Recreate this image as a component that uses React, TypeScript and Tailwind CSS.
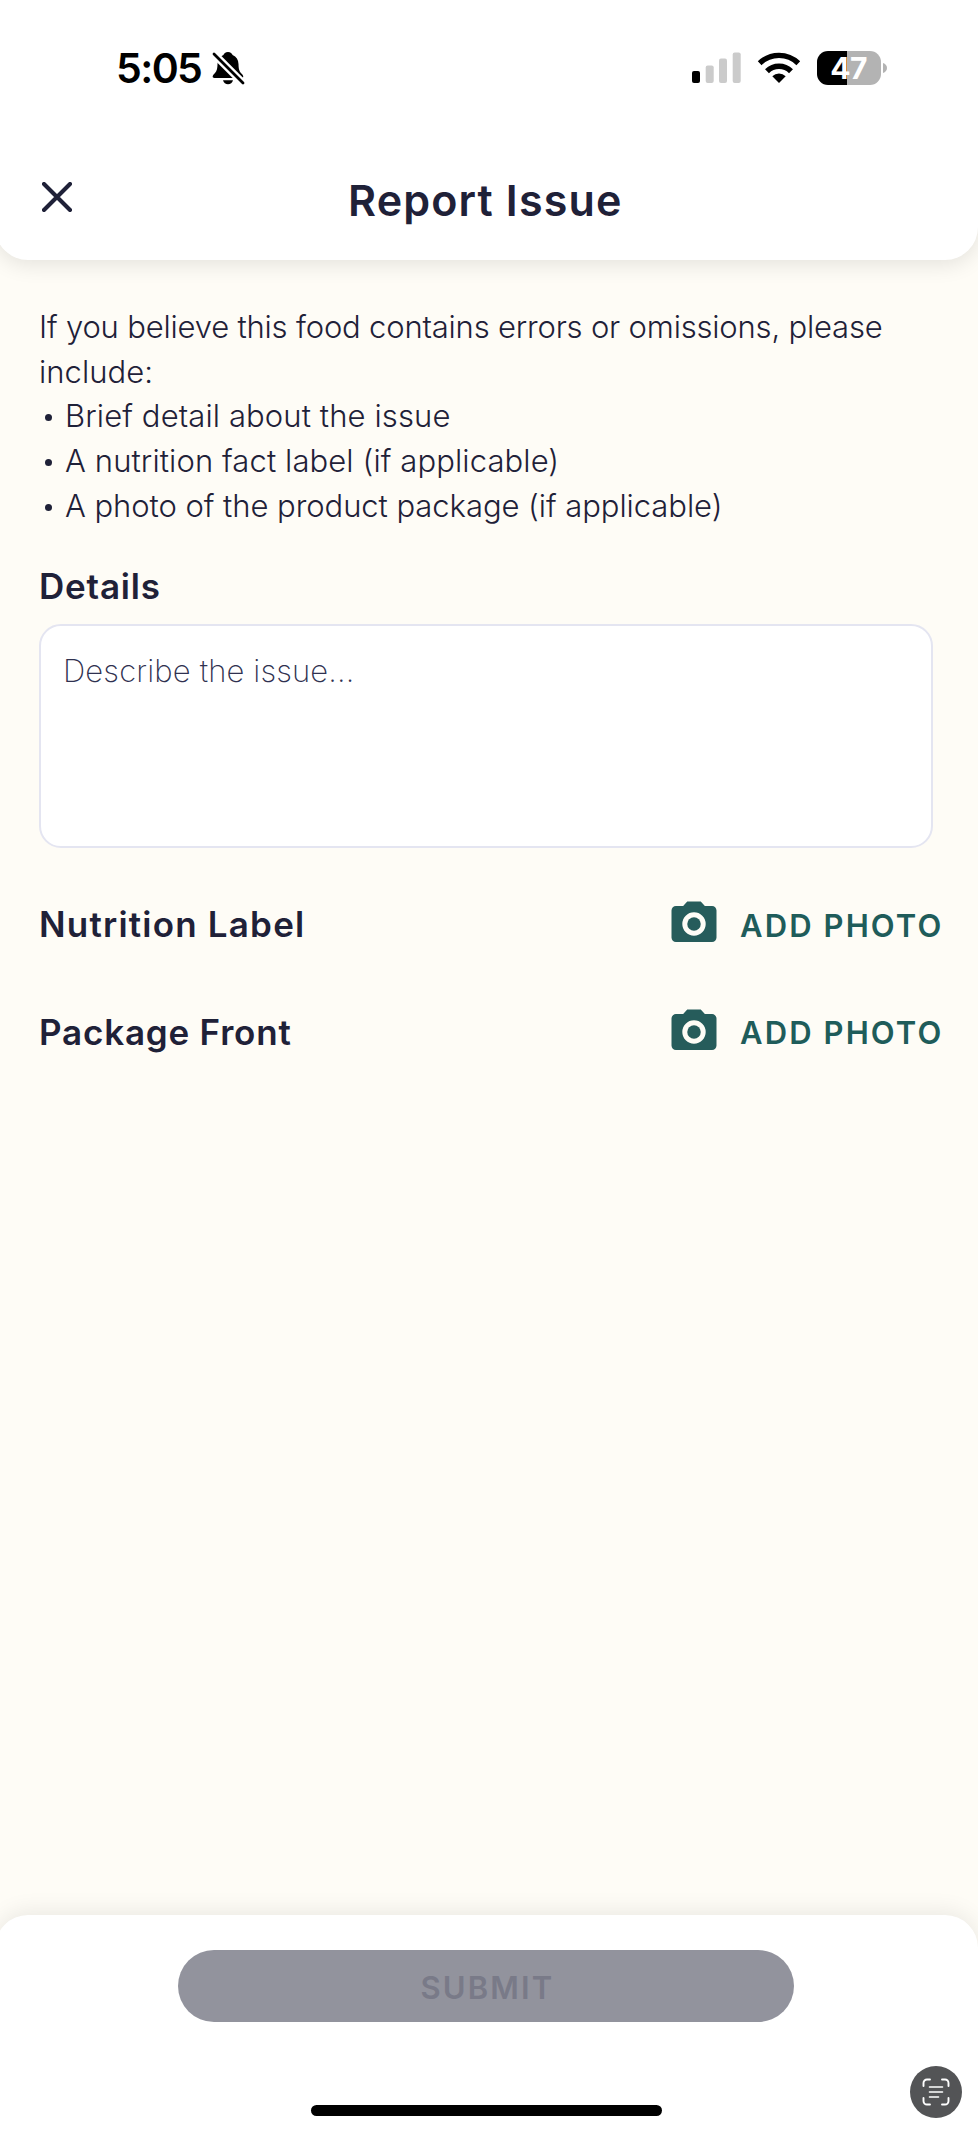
import React from "react";

function BellOff() {
  return (
    <svg width="34" height="36" viewBox="0 0 34 36" fill="none" className="shrink-0">
      <path
        d="M17 2c-2.6 0-4 1.5-4.6 3C8.600 6.500 6.600 9.800 6.500 14c-.1 5.500-1 7.500-3.200 9.800C1.200 26 1 28 3.500 28h27c2.500 0 2.200-2 .2-4.200-2.300-2.300-3.100-4.300-3.200-9.800-.1-4.200-2.100-7.500-5.900-9C21 3.500 19.600 2 17 2z"
        fill="#000"
      />
      <path d="M12 30.300h10c-.7 2.500-2.600 4-5 4s-4.300-1.500-5-4z" fill="#000" />
      <path d="M3 4 32 33" stroke="#fff" strokeWidth="7.500" />
      <path d="M3 4 32 33" stroke="#000" strokeWidth="2.800" strokeLinecap="round" />
    </svg>
  );
}

function Signal() {
  return (
    <svg width="49" height="32" viewBox="0 0 49 32" className="shrink-0">
      <rect x="0" y="19" width="8" height="12" rx="2" fill="#000" />
      <rect x="13.700" y="13.500" width="8" height="17.500" rx="2" fill="#cbcbcb" />
      <rect x="27" y="6.500" width="8" height="24.500" rx="2" fill="#cbcbcb" />
      <rect x="40.700" y="0.500" width="8" height="30.500" rx="2" fill="#cbcbcb" />
    </svg>
  );
}

function Wifi() {
  return (
    <svg width="44" height="32" viewBox="0 0 44 32" fill="none" className="shrink-0">
      <path d="M2.700 11.200a27.600 27.600 0 0 1 38.600 0" stroke="#000" strokeWidth="5.400" />
      <path d="M10 19.200a17.200 17.200 0 0 1 24 0" stroke="#000" strokeWidth="5.600" />
      <path d="M22 31l-6.700-6.700a9.600 9.600 0 0 1 13.400 0z" fill="#000" />
    </svg>
  );
}

function Camera() {
  return (
    <svg width="54" height="54" viewBox="0 0 24 24" className="shrink-0">
      <path
        fillRule="evenodd"
        fill="#265c5b"
        d="M9 2 7.170 4H4c-1.100 0-2 .9-2 2v12c0 1.100.9 2 2 2h16c1.100 0 2-.9 2-2V6c0-1.100-.9-2-2-2h-3.170L15 2H9zm3 15.200a5.200 5.200 0 1 1 0-10.400 5.200 5.200 0 0 1 0 10.400z"
      />
      <circle cx="12" cy="12" r="3" fill="#265c5b" />
    </svg>
  );
}

function PhotoRow({ label, labelClass }: { label: string; labelClass: string }) {
  return (
    <div className="flex h-[107.500px] items-center pl-[39px] pr-[34px]">
      <h2 className={`flex-1 whitespace-nowrap pt-[1px] text-[35px] font-semibold leading-none text-[#1f2138] ${labelClass}`}>
        {label}
      </h2>
      <button className="flex items-center">
        <Camera />
        <span className="ml-[19px] w-[204px] whitespace-nowrap pt-[2px] text-left text-[31px] font-semibold leading-none tracking-[2.100px] text-[#1f5c5a]">
          ADD PHOTO
        </span>
      </button>
    </div>
  );
}

const items = [
  { text: "Brief detail about the issue", tracking: "tracking-[0.110px]" },
  { text: "A nutrition fact label (if applicable)", tracking: "tracking-[0.100px]" },
  { text: "A photo of the product package (if applicable)", tracking: "tracking-[-0.060px]" },
];

export default function App() {
  return (
    <div className="flex h-[2132px] w-[978px] flex-col overflow-hidden bg-[#fefcf6] font-['Inter',sans-serif] text-[#1f2138]">
      <header className="-ml-[5px] flex h-[260px] w-[983px] shrink-0 flex-col rounded-b-[33px] bg-white pl-[5px] shadow-[0_4px_22px_rgba(0,0,0,0.11)]">
        <div className="flex h-[136px] items-center">
          <span className="ml-[116px] w-[95px] whitespace-nowrap pt-[1px] text-[41px] font-semibold leading-none tracking-[-1.600px] text-black">
            5:05
          </span>
          <BellOff />
          <div className="ml-auto flex items-center pr-[91px]">
            <Signal />
            <span className="w-[16px]" />
            <Wifi />
            <span className="w-[16px]" />
            <div className="flex h-[34px] w-[64px] items-center justify-center rounded-[11px] bg-[linear-gradient(to_right,#000_47%,#b3b3b3_47%)] pr-[1px]">
              <span className="text-[30px] font-bold leading-none tracking-[-0.5px] text-white">47</span>
            </div>
            <svg width="6" height="12" viewBox="0 0 6 12" className="-mr-[1px] ml-[1px]">
              <path d="M1 1c2.500.8 4 2.700 4 5s-1.500 4.200-4 5z" fill="#b3b3b3" />
            </svg>
          </div>
        </div>
        <div className="flex h-[124px] items-start">
          <svg width="30" height="30" viewBox="0 0 30 30" className="ml-[42px] mt-[46px] shrink-0">
            <path d="M2 2 28 28M28 2 2 28" stroke="#1f2138" strokeWidth="4.100" strokeLinecap="round" />
          </svg>
          <h1 className="ml-[276px] mt-[44px] whitespace-nowrap text-[43px] font-semibold leading-[40px] tracking-[1.150px]">
            Report Issue
          </h1>
        </div>
      </header>

      <main className="flex flex-1 flex-col pt-[45px]">
        <div className="whitespace-pre pl-[39px] text-[31px] font-light leading-[44.700px]">
          <p className="tracking-[-0.190px]">If you believe this food contains errors or omissions, please</p>
          <p className="tracking-[0.040px]">include:</p>
          <ul>
            {items.map(({ text, tracking }) => (
              <li key={text} className={`flex items-center ${tracking}`}>
                <span className="ml-[6px] mr-[13px] mt-[2px] size-[7px] rounded-full bg-[#1f2138]" />
                {text}
              </li>
            ))}
          </ul>
        </div>
        <h2 className="mt-[37px] pl-[39px] text-[35px] font-semibold leading-[40px] tracking-[0.800px]">
          Details
        </h2>
        <div className="ml-[39px] mt-[18px] h-[224px] w-[894px] shrink-0 rounded-[22px] border-2 border-[#e4e5f1] bg-white px-[22px] pt-[23px] text-[31px] font-extralight leading-[44px] tracking-[0.150px] text-[#2f3150]">
          Describe the issue...
        </div>
        <div className="mt-[23px]">
          <PhotoRow label="Nutrition Label" labelClass="tracking-[1.200px]" />
          <PhotoRow label="Package Front" labelClass="tracking-[0.800px]" />
        </div>
      </main>

      <footer className="-ml-[5px] flex h-[217px] w-[983px] shrink-0 flex-col rounded-t-[33px] bg-white pl-[5px] pt-[35px] shadow-[0_-4px_22px_rgba(0,0,0,0.08)]">
        <button className="ml-[178px] h-[72px] w-[616px] rounded-full bg-[#92939d] pl-[3px] pt-[2px] text-center text-[31px] font-semibold leading-none tracking-[2.150px] text-[#797a88]">
          SUBMIT
        </button>
        <div className="flex pt-[44px]">
          <div className="ml-[311px] mt-[39px] h-[11px] w-[351px] rounded-full bg-black" />
          <div className="ml-[248px] flex size-[52px] items-center justify-center rounded-full bg-[#535456]">
            <svg width="28" height="28" viewBox="0 0 28 28" fill="none" stroke="#fff" strokeWidth="1.900" strokeLinecap="round">
              <path d="M1.500 8V5a3.500 3.500 0 0 1 3.500-3.500h3M20 1.500h3A3.500 3.500 0 0 1 26.500 5v3M26.500 20v3a3.500 3.500 0 0 1-3.500 3.500h-3M8 26.500H5A3.500 3.500 0 0 1 1.500 23v-3" />
              <path d="M7.500 9h13M7.500 14h13M7.500 19h9" strokeWidth="1.600" />
            </svg>
          </div>
        </div>
      </footer>
    </div>
  );
}
